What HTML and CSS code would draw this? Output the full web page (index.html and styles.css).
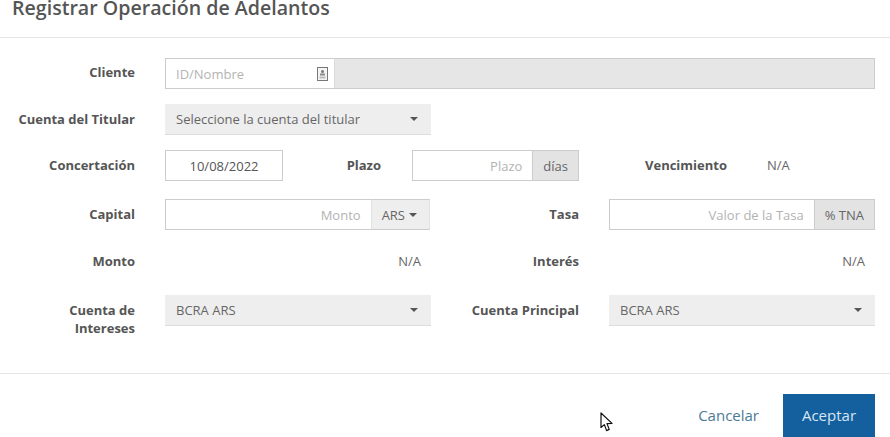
FILE: index.html
```html
<!DOCTYPE html>
<html lang="es">
<head>
<meta charset="utf-8">
<title>Registrar Operación de Adelantos</title>
<link rel="stylesheet" href="styles.css">
</head>
<body>
<div class="modal">
  <header class="modal-header"><h1>Registrar Operación de Adelantos</h1></header>
  <form class="modal-body">
    <div class="row row-cliente">
      <label class="label">Cliente</label>
      <div class="group grow">
        <div class="field id-field">
          <span class="placeholder">ID/Nombre</span>
          <svg class="id-icon" width="11" height="14" viewBox="0 0 11 14"><rect x="0.5" y="0.5" width="10" height="13" fill="#f4f4f4" stroke="#777"/><circle cx="5.5" cy="4.5" r="1.5" fill="#777"/><rect x="3" y="6.5" width="5" height="2" fill="#888"/><rect x="2.5" y="9.5" width="6" height="2" fill="#bbb"/></svg>
        </div>
        <div class="disabled-fill"></div>
      </div>
    </div>
    <div class="row row-titular">
      <label class="label">Cuenta del Titular</label>
      <div class="select w-266"><span>Seleccione la cuenta del titular</span><i class="caret"></i></div>
    </div>
    <div class="row row-fecha">
      <label class="label">Concertación</label>
      <div class="field date">10/08/2022</div>
      <label class="label label-plazo">Plazo</label>
      <div class="group w-167">
        <div class="field grow right"><span class="placeholder">Plazo</span></div>
        <span class="addon">días</span>
      </div>
      <label class="label label-venc">Vencimiento</label>
      <span class="value">N/A</span>
    </div>
    <div class="row row-capital">
      <label class="label">Capital</label>
      <div class="group w-265">
        <div class="field grow right"><span class="placeholder">Monto</span></div>
        <span class="addon addon-light">ARS<i class="caret caret-small"></i></span>
      </div>
      <label class="label label-right">Tasa</label>
      <div class="group w-266">
        <div class="field grow right"><span class="placeholder">Valor de la Tasa</span></div>
        <span class="addon">% TNA</span>
      </div>
    </div>
    <div class="row row-monto">
      <label class="label">Monto</label>
      <span class="value amount">N/A</span>
      <label class="label label-interes">Interés</label>
      <span class="value amount amount-right">N/A</span>
    </div>
    <div class="row row-cuentas">
      <label class="label label-wrap">Cuenta de Intereses</label>
      <div class="select w-266"><span>BCRA ARS</span><i class="caret"></i></div>
      <label class="label label-principal">Cuenta Principal</label>
      <div class="select w-266"><span>BCRA ARS</span><i class="caret"></i></div>
    </div>
  </form>
  <footer class="modal-footer">
    <a class="cancel">Cancelar</a>
    <button class="accept" type="button">Aceptar</button>
  </footer>
</div>
<svg class="cursor" width="14" height="21" viewBox="0 0 14 21"><path d="M1 1 L1 15.5 L4.4 12.6 L6.6 18.6 L9.2 17.4 L7 11.6 L12 11.4 Z" fill="#fff" stroke="#111" stroke-width="1.2" stroke-linejoin="round"/></svg>
</body>
</html>
```
FILE: styles.css
```css
* { box-sizing: border-box; }
html, body { margin: 0; height: 437px; overflow: hidden; background: #fff; }
body { font-family: "Open Sans", sans-serif; font-size: 13px; color: #666; position: relative; }
.modal { height: 437px; overflow: hidden; }
.modal-header { height: 38px; border-bottom: 1px solid #e5e5e5; padding: 0 12px; display: flex; align-items: flex-end; overflow: hidden; }
.modal-header h1 { margin: 0 0 17px; font-size: 19.6px; line-height: 24px; font-weight: 600; color: #555; white-space: nowrap; }
.modal-body { padding: 20px 15px 0 0; height: 336px; border-bottom: 1px solid #e5e5e5; }
.row { display: flex; align-items: center; height: 31px; }
.row-titular { margin-top: 15px; }
.row-fecha { margin-top: 15px; }
.row-capital { margin-top: 18px; }
.row-monto { margin-top: 16px; height: 31px; }
.row-cuentas { margin-top: 18px; align-items: flex-start; }
.label { width: 135px; margin-right: 30px; margin-bottom: 2px; flex: none; text-align: right; font-weight: 700; color: #555; line-height: 18px; }
.row-cliente .label { margin-bottom: 3px; }
.row-cuentas .label { margin-top: 6px; margin-bottom: 0; }
.label-wrap { padding-left: 50px; }
.label-plazo { width: 98px; margin-right: 31px; }
.label-venc { width: 148px; margin-right: 40px; }
.label-right { width: 149px; }
.label-interes { width: 158px; }
.label-principal { width: 148px; }
.group { display: flex; height: 31px; flex: none; }
.grow { flex: 1; }
.w-167 { width: 167px; }
.w-265 { width: 265px; }
.w-266 { width: 266px; }
.field { height: 31px; border: 1px solid #ccc; background: #fff; padding: 0 10px; display: flex; align-items: center; line-height: 18px; }
.placeholder { color: #b3b3b3; }
.right { justify-content: flex-end; border-right: 0; min-width: 0; }
.date { width: 118px; justify-content: center; color: #555; flex: none; }
.id-field { width: 169px; flex: none; justify-content: space-between; padding-right: 6px; border-right: 0; }
.disabled-fill { flex: 1; background: #e6e6e6; border: 1px solid #ccc; border-left: 1px solid #dcdcdc; }
.addon { background: #e3e3e3; border: 1px solid #ccc; padding: 0 10px; display: flex; align-items: center; flex: none; color: #666; line-height: 18px; }
.addon-light { background: #eee; border-color: #e2e2e2; border-bottom-color: #ccc; border-top-color: #ccc; padding: 0 12px 0 10px; }
.select { height: 31px; background: #eee; border-bottom: 1px solid #ddd; padding: 0 13px 0 11px; display: flex; align-items: center; justify-content: space-between; color: #666; flex: none; }
.caret { width: 0; height: 0; border-left: 4px solid transparent; border-right: 4px solid transparent; border-top: 4px solid #555; }
.caret-small { margin-left: 4px; }
.value { color: #666; margin-bottom: 2px; }
.amount { width: 256px; flex: none; text-align: right; }
.amount-right { width: 256px; }
.modal-footer { display: flex; justify-content: flex-end; align-items: flex-start; padding: 20px 15px 0 0; gap: 24px; }
.cancel { color: #4a7a96; font-size: 15px; line-height: 42px; }
.accept { width: 92px; height: 44px; background: #14609f; color: #d8e6f2; border: 0; font: 15px "Open Sans", sans-serif; padding: 0 0 2px; }
.cursor { position: absolute; left: 600px; top: 412px; }
```
